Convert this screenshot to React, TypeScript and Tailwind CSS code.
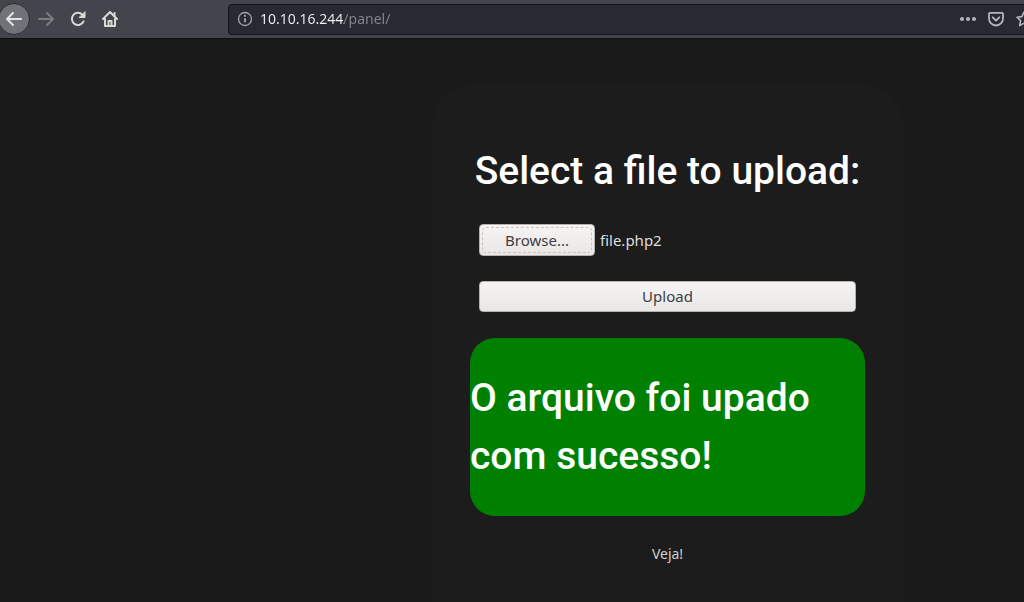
import React, { useState } from 'react';

const iconButton = 'flex h-8 w-8 shrink-0 items-center justify-center';

const BrowserBar: React.FC = () => {
  const [url, setUrl] = useState('10.10.16.244/panel/');

  return (
    <header className="flex h-[39px] items-center border-b border-[#0f0f12] bg-[#43454d]">
      <nav className="flex w-[228px] shrink-0 items-center pb-px">
        <button type="button" aria-label="Back" className="-ml-0.5 flex h-8 w-8 shrink-0 items-center justify-center rounded-full border border-[#2b2c30] bg-[#707278] text-[#e4e4e4]">
          <svg width="18" height="18" viewBox="0 0 18 18" fill="none" stroke="currentColor" strokeWidth="2" strokeLinecap="round" strokeLinejoin="round">
            <path d="M16 9H2.5M8 3L2 9l6 6" />
          </svg>
        </button>
        <button type="button" aria-label="Forward" disabled className={iconButton + ' text-[#7b7c80]'}>
          <svg width="18" height="18" viewBox="0 0 18 18" fill="none" stroke="currentColor" strokeWidth="2" strokeLinecap="round" strokeLinejoin="round">
            <path d="M2 9h13.5M10 3l6 6-6 6" />
          </svg>
        </button>
        <button type="button" aria-label="Reload" className={iconButton + ' text-[#d9d9d6]'}>
          <svg width="18" height="18" viewBox="0 0 18 18" fill="none" stroke="currentColor" strokeWidth="2" strokeLinecap="round" strokeLinejoin="round">
            <path d="M14.5 11.5A6.1 6.1 0 1 1 13.3 4.6L14.5 6" />
            <path d="M16 2v5.5h-5.5z" fill="currentColor" strokeWidth="1" />
          </svg>
        </button>
        <button type="button" aria-label="Home" className={iconButton + ' text-[#d9d9d6]'}>
          <svg width="18" height="18" viewBox="0 0 18 18" fill="none" stroke="currentColor" strokeWidth="2" strokeLinecap="round" strokeLinejoin="round">
            <path d="M2 9l7-7 7 7M4 9v7h10V9" />
            <path d="M7.5 16v-5h3v5" />
            <path d="M13.5 3v3" />
          </svg>
        </button>
      </nav>

      <div className="flex h-[31px] min-w-0 flex-1 items-center overflow-hidden rounded-l border border-r-0 border-[#15161b] bg-[#272933] pl-2">
        <svg className="shrink-0 text-[#a5a6aa]" width="16" height="16" viewBox="0 0 16 16" fill="none" stroke="currentColor">
          <circle cx="8" cy="8" r="6.5" strokeWidth="1.3" />
          <path d="M8 7.3v4" strokeWidth="1.8" />
          <circle cx="8" cy="4.8" r="1.1" fill="currentColor" stroke="none" />
        </svg>
        <input
          type="text"
          aria-label="Address"
          value={url}
          onChange={(e) => setUrl(e.target.value)}
          className="ml-[7px] min-w-0 flex-1 bg-[linear-gradient(to_right,#f4f4f4_84px,#85868b_84px)] bg-clip-text font-['Noto_Sans',sans-serif] text-sm text-transparent outline-none"
        />
        <div className="-mr-2 flex shrink-0 items-center gap-3 text-[#b5b6b9]">
          <button type="button" aria-label="Page actions">
            <svg className="block" width="16" height="16" viewBox="0 0 16 16" fill="currentColor">
              <circle cx="2" cy="8" r="2" />
              <circle cx="8" cy="8" r="2" />
              <circle cx="14" cy="8" r="2" />
            </svg>
          </button>
          <button type="button" aria-label="Save to Pocket">
            <svg className="block" width="16" height="16" viewBox="0 0 16 16" fill="none" stroke="currentColor" strokeWidth="1.8" strokeLinecap="round" strokeLinejoin="round">
              <path d="M2 1.8h12a1 1 0 0 1 1 1V7.5a7 7 0 0 1-14 0V2.8a1 1 0 0 1 1-1z" />
              <path d="M4.7 6.3L8 9.5l3.3-3.2" />
            </svg>
          </button>
          <button type="button" aria-label="Bookmark">
            <svg className="block" width="16" height="16" viewBox="0 0 16 16" fill="none" stroke="currentColor" strokeWidth="1.6" strokeLinejoin="round">
              <path d="M8 1l2.1 4.6 4.9.6-3.6 3.4.9 5L8 12.2l-4.3 2.4.9-5L1 6.2l4.9-.6z" />
            </svg>
          </button>
        </div>
      </div>
    </header>
  );
};

const UploadCard: React.FC = () => {
  const [fileName, setFileName] = useState('file.php2');

  return (
    <section className="w-full max-w-[471px] rounded-t-[40px] bg-[#1c1c1c] px-[38px] pt-[58px] pb-8">
      <h1 className="text-center font-[Roboto,sans-serif] text-[39px] leading-[58px] font-medium whitespace-nowrap">Select a file to upload:</h1>

      <form className="mt-6 px-[9px]" onSubmit={(e) => e.preventDefault()}>
        <div className="flex items-center gap-[5px] text-[15px]">
          <label
            htmlFor="file"
            className="flex h-8 w-[116px] cursor-default rounded border border-[#b8b2ac] bg-linear-to-b from-[#f6f5f4] to-[#e9e7e5] p-0.5 text-[#3b4043]"
          >
            <span className="flex flex-1 items-center justify-center rounded-sm border border-dashed border-[#c6c4c1]">Browse...</span>
          </label>
          <input
            id="file"
            type="file"
            className="sr-only"
            onChange={(e) => setFileName(e.target.files?.[0]?.name ?? 'file.php2')}
          />
          <span className="text-[#dedede]">{fileName}</span>
        </div>
        <button
          type="submit"
          className="mt-[25px] block h-[31px] w-full rounded border border-[#b8b2ac] bg-linear-to-b from-[#f6f5f4] to-[#e9e7e5] text-[15px] text-[#3b4043]"
        >
          Upload
        </button>
      </form>

      <div className="mt-[26px] rounded-[25px] bg-[#008000] py-[31px]">
        <p className="font-[Roboto,sans-serif] text-[39px] leading-[58px] font-medium">O arquivo foi upado com sucesso!</p>
      </div>

      <p className="mt-7 text-center text-sm">
        <a href="#veja" className="text-[#d0d0d0]">Veja!</a>
      </p>
    </section>
  );
};

const App: React.FC = () => {
  return (
    <div className="flex min-h-screen flex-col bg-[#1a1a1a] font-['Noto_Sans',sans-serif] text-white">
      <BrowserBar />
      <main className="flex flex-1 justify-center pt-[45px] pl-[311px]">
        <UploadCard />
      </main>
    </div>
  );
};

export default App;
